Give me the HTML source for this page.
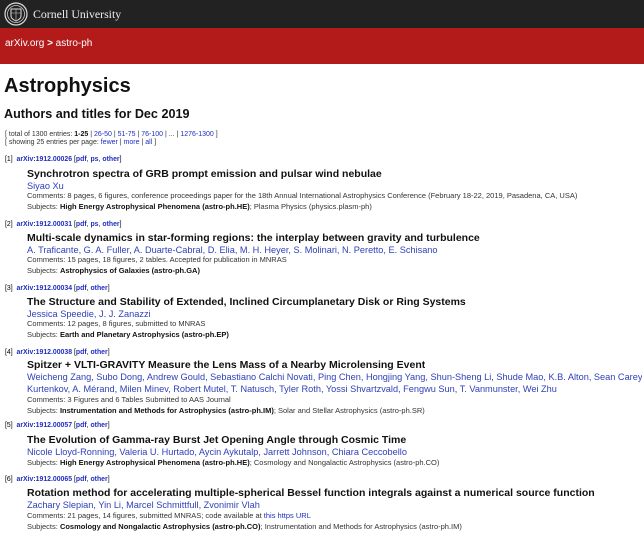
<!DOCTYPE html>
<html><head><meta charset="utf-8"><style>
body{margin:0;width:644px;height:534px;overflow:hidden;background:#fff;font-family:"Liberation Sans",Arial,sans-serif;position:relative;color:#000}
.l{position:absolute;white-space:nowrap;line-height:12px;height:12px;max-width:617px;overflow:hidden}
a{color:#1f2ec0;text-decoration:none}
.id{font-size:6.9px;left:5px;color:#000}
.id a{font-weight:bold}
.t{font-size:10.5px;font-weight:bold;left:27px;color:#111}
.au{font-size:9.2px;left:27px;color:#2f3fb8}
.c{font-size:7.5px;left:27px;color:#333}
.c b{color:#111}
</style></head><body>
<div style="position:absolute;left:0;top:0;width:644px;height:28px;background:#222"></div>
<svg style="position:absolute;left:4px;top:2px" width="24" height="24" viewBox="0 0 24 24"><circle cx="12" cy="12" r="11" fill="none" stroke="#ddd" stroke-width="1.2"/><circle cx="12" cy="12" r="8.5" fill="none" stroke="#ccc" stroke-width="0.8"/><path d="M7 7h10v7c0 3-5 5-5 5s-5-2-5-5z" fill="none" stroke="#ddd" stroke-width="1"/><path d="M12 7v11M7 11h10" stroke="#ccc" stroke-width="0.6"/></svg>
<div class="l" style="left:33px;top:7px;font-family:'Liberation Serif',serif;font-size:11.8px;line-height:14px;height:14px;color:#eee">Cornell University</div>
<div style="position:absolute;left:0;top:28px;width:644px;height:36px;background:#b31b1b"></div>
<div class="l" style="left:5px;top:38px;font-size:10px;color:#fff">arXiv.org <b>&gt;</b> astro-ph</div>
<div class="l" style="left:4px;top:75px;font-size:20px;line-height:22px;height:22px;font-weight:bold;color:#111">Astrophysics</div>
<div class="l" style="left:4px;top:106px;font-size:12.6px;line-height:17px;height:17px;font-weight:bold;color:#111">Authors and titles for Dec 2019</div>
<div class="l c" style="left:5px;top:129px;font-size:7px">[ total of 1300 entries: <b>1-25</b> | <a>26-50</a> | <a>51-75</a> | <a>76-100</a> | ... | <a>1276-1300</a> ]</div>
<div class="l c" style="left:5px;top:137px;font-size:7px">[ showing 25 entries per page: <a>fewer</a> | <a>more</a> | <a>all</a> ]</div>

<div class="l id" style="top:154px">[1]&nbsp; <a>arXiv:1912.00026</a> [<a>pdf</a>, <a>ps</a>, <a>other</a>]</div>
<div class="l t" style="top:168px">Synchrotron spectra of GRB prompt emission and pulsar wind nebulae</div>
<div class="l au" style="top:180px">Siyao Xu</div>
<div class="l c" style="top:190px">Comments: 8 pages, 6 figures, conference proceedings paper for the 18th Annual International Astrophysics Conference (February 18-22, 2019, Pasadena, CA, USA)</div>
<div class="l c" style="top:201px">Subjects: <b>High Energy Astrophysical Phenomena (astro-ph.HE)</b>; Plasma Physics (physics.plasm-ph)</div>

<div class="l id" style="top:219px">[2]&nbsp; <a>arXiv:1912.00031</a> [<a>pdf</a>, <a>ps</a>, <a>other</a>]</div>
<div class="l t" style="top:232px">Multi-scale dynamics in star-forming regions: the interplay between gravity and turbulence</div>
<div class="l au" style="top:244px">A. Traficante, G. A. Fuller, A. Duarte-Cabral, D. Elia, M. H. Heyer, S. Molinari, N. Peretto, E. Schisano</div>
<div class="l c" style="top:254px">Comments: 15 pages, 18 figures, 2 tables. Accepted for publication in MNRAS</div>
<div class="l c" style="top:265px">Subjects: <b>Astrophysics of Galaxies (astro-ph.GA)</b></div>

<div class="l id" style="top:283px">[3]&nbsp; <a>arXiv:1912.00034</a> [<a>pdf</a>, <a>other</a>]</div>
<div class="l t" style="top:296px">The Structure and Stability of Extended, Inclined Circumplanetary Disk or Ring Systems</div>
<div class="l au" style="top:308px">Jessica Speedie, J. J. Zanazzi</div>
<div class="l c" style="top:318px">Comments: 12 pages, 8 figures, submitted to MNRAS</div>
<div class="l c" style="top:329px">Subjects: <b>Earth and Planetary Astrophysics (astro-ph.EP)</b></div>

<div class="l id" style="top:347px">[4]&nbsp; <a>arXiv:1912.00038</a> [<a>pdf</a>, <a>other</a>]</div>
<div class="l t" style="top:359px">Spitzer + VLTI-GRAVITY Measure the Lens Mass of a Nearby Microlensing Event</div>
<div class="l au" style="top:371px">Weicheng Zang, Subo Dong, Andrew Gould, Sebastiano Calchi Novati, Ping Chen, Hongjing Yang, Shun-Sheng Li, Shude Mao, K.B. Alton, Sean Carey</div>
<div class="l au" style="top:383px">Kurtenkov, A. Mérand, Milen Minev, Robert Mutel, T. Natusch, Tyler Roth, Yossi Shvartzvald, Fengwu Sun, T. Vanmunster, Wei Zhu</div>
<div class="l c" style="top:394px">Comments: 3 Figures and 6 Tables Submitted to AAS Journal</div>
<div class="l c" style="top:405px">Subjects: <b>Instrumentation and Methods for Astrophysics (astro-ph.IM)</b>; Solar and Stellar Astrophysics (astro-ph.SR)</div>

<div class="l id" style="top:420px">[5]&nbsp; <a>arXiv:1912.00057</a> [<a>pdf</a>, <a>other</a>]</div>
<div class="l t" style="top:434px">The Evolution of Gamma-ray Burst Jet Opening Angle through Cosmic Time</div>
<div class="l au" style="top:446px">Nicole Lloyd-Ronning, Valeria U. Hurtado, Aycin Aykutalp, Jarrett Johnson, Chiara Ceccobello</div>
<div class="l c" style="top:457px">Subjects: <b>High Energy Astrophysical Phenomena (astro-ph.HE)</b>; Cosmology and Nongalactic Astrophysics (astro-ph.CO)</div>

<div class="l id" style="top:474px">[6]&nbsp; <a>arXiv:1912.00065</a> [<a>pdf</a>, <a>other</a>]</div>
<div class="l t" style="top:487px">Rotation method for accelerating multiple-spherical Bessel function integrals against a numerical source function</div>
<div class="l au" style="top:499px">Zachary Slepian, Yin Li, Marcel Schmittfull, Zvonimir Vlah</div>
<div class="l c" style="top:510px">Comments: 21 pages, 14 figures, submitted MNRAS; code available at <a>this https URL</a></div>
<div class="l c" style="top:521px">Subjects: <b>Cosmology and Nongalactic Astrophysics (astro-ph.CO)</b>; Instrumentation and Methods for Astrophysics (astro-ph.IM)</div>
</body></html>
